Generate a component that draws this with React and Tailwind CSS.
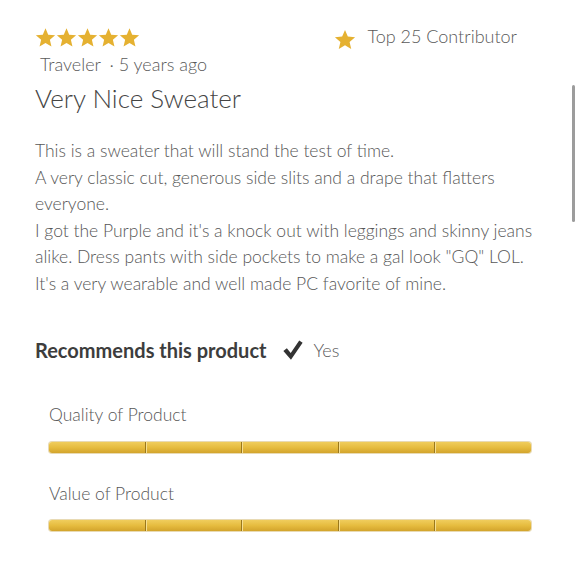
import React from "react";

const Star = ({ className }) => (
  <svg viewBox="0 0 24 24" className={className} fill="#e5b131">
    <path d="M12 1.5l3.09 7.26 7.91.66-6 5.2 1.8 7.73L12 18.2l-6.8 4.15 1.8-7.73-6-5.2 7.91-.66z" />
  </svg>
);

const Bar = () => (
  <div className="flex h-[11px] w-[482px] overflow-hidden rounded-[3px] shadow-[0_0_0_1px_rgba(190,150,40,0.35)]">
    {[0, 1, 2, 3, 4].map((i) => (
      <div
        key={i}
        className={
          "h-full flex-1 bg-gradient-to-b from-[#f0cd5c] via-[#e6bc3f] to-[#d3a42c] " +
          (i > 0 ? "border-l border-l-[#9a781c] shadow-[inset_1px_0_0_#f6df92]" : "")
        }
      />
    ))}
  </div>
);

export default function App() {
  return (
    <div
      className="relative h-[580px] w-[580px] overflow-hidden bg-white text-[#5a5a5a]"
      style={{ fontFamily: "Lato, 'Open Sans', sans-serif" }}
    >
      <div className="absolute right-[5px] top-[85px] h-[137px] w-[3px] rounded-full bg-[#9c9c9c]" />
      <div className="pl-[35px] pr-[40px] pt-[26px]">
        <div className="flex items-start justify-between">
          <div className="flex flex-col">
            <div className="flex gap-0">
              {[0, 1, 2, 3, 4].map((i) => (
                <Star key={i} className="h-[23px] w-[21px]" />
              ))}
            </div>
            <div className="mt-[4px] pl-[5px] text-[18px] leading-[22px] font-light text-[#5a5a5a]">
              Traveler <span className="ml-[4px]">· 5 years ago</span>
            </div>
          </div>
          <div className="mr-[23px] -mt-[4px] flex items-center gap-[11px]">
            <Star className="h-[23px] w-[22px] mt-[6px]" />
            <span className="text-[18px] font-light text-[#5a5a5a]">Top 25 Contributor</span>
          </div>
        </div>
        <h1 className="mt-[7px] text-[26px] leading-[32px] text-[#444] font-light">Very Nice Sweater</h1>
        <div className="mt-[24px] whitespace-nowrap text-[17.5px] leading-[26.5px] font-light text-[#575757]">
          This is a sweater that will stand the test of time.
          <br />
          A very classic cut, generous side slits and a drape that flatters
          <br />
          everyone.
          <br />
          I got the Purple and it's a knock out with leggings and skinny jeans
          <br />
          alike. Dress pants with side pockets to make a gal look "GQ" LOL.
          <br />
          It's a very wearable and well made PC favorite of mine.
        </div>
        <div className="mt-[41px] flex items-center leading-[24px]">
          <span className="text-[20px] font-bold text-[#3d3d3d]">Recommends this product</span>
          <svg viewBox="0 0 24 24" className="ml-[16px] h-[24px] w-[22px]" fill="#333">
            <path d="M1.5 13.2l3.8-3 4.2 5.2L18.8 1.5l3.7 2.6L9.8 22.5z" />
          </svg>
          <span className="ml-[9px] text-[18px] font-light text-[#5a5a5a]">Yes</span>
        </div>
        <div className="pl-[14px]">
          <div className="mt-[42px] text-[17.5px] leading-[22px] font-light text-[#575757]">Quality of Product</div>
          <div className="mt-[16px]">
            <Bar />
          </div>
          <div className="mt-[30px] text-[17.5px] leading-[22px] font-light text-[#575757]">Value of Product</div>
          <div className="mt-[15px]">
            <Bar />
          </div>
        </div>
      </div>
    </div>
  );
}
